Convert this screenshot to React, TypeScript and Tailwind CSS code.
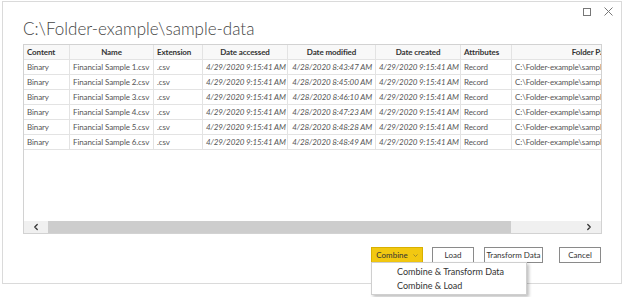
import { ChevronLeft, ChevronRight } from 'lucide-react';

const rows = [
  { n: 1, mod: '4/28/2020 8:43:47 AM' },
  { n: 2, mod: '4/28/2020 8:45:00 AM' },
  { n: 3, mod: '4/28/2020 8:46:10 AM' },
  { n: 4, mod: '4/28/2020 8:47:23 AM' },
  { n: 5, mod: '4/28/2020 8:48:28 AM' },
  { n: 6, mod: '4/28/2020 8:48:49 AM' },
];

const cell = 'h-[15px] border-r border-b border-[#e3e3e3] px-[3px] leading-[14px] whitespace-nowrap overflow-hidden';

export default function App() {
  return (
    <div className="relative w-[624px] h-[297px] bg-white overflow-hidden" style={{ fontFamily: 'Lato, "Noto Sans", sans-serif' }}>
      <div className="ml-[2px] mt-[1px] w-[620px] h-[283px] border border-[#dadada] bg-white flex flex-col">
        {/* window controls */}
        <div className="flex justify-end items-center gap-[13px] pr-[8px] pt-[5px] h-[14px] text-[#777]">
          <svg width="8" height="8" viewBox="0 0 8 8">
            <rect x="0.5" y="0.5" width="7" height="7" fill="none" stroke="#777" strokeWidth="1" />
          </svg>
          <svg width="9" height="9" viewBox="0 0 9 9">
            <path d="M0.5 0.5 L8.5 8.5 M8.5 0.5 L0.5 8.5" stroke="#777" strokeWidth="1" />
          </svg>
        </div>

        <div className="pl-[20px] mt-[3px] h-[25px] text-[17px] font-light text-[#444] leading-[20px]">
          C:\Folder-example\sample-data
        </div>

        {/* table */}
        <div className="ml-[20px] w-[579px] h-[190px] border border-[#d2d2d2] flex flex-col">
          <div className="flex-1 overflow-hidden">
            <div className="w-[720px] text-[8px] tracking-[-0.1px] text-[#555]">
              <div className="flex font-bold text-[#333] bg-[#f8f8f8]">
                <div className={`${cell} w-[46px]`}>Content</div>
                <div className={`${cell} w-[84px] text-center`}>Name</div>
                <div className={`${cell} w-[49px]`}>Extension</div>
                <div className={`${cell} w-[85px] text-center`}>Date accessed</div>
                <div className={`${cell} w-[88px] text-center`}>Date modified</div>
                <div className={`${cell} w-[85px] text-center`}>Date created</div>
                <div className={`${cell} w-[51px]`}>Attributes</div>
                <div className={`${cell} w-[160px] text-center`}>Folder Path</div>
              </div>
              {rows.map((r) => (
                <div key={r.n} className="flex">
                  <div className={`${cell} w-[46px]`}>Binary</div>
                  <div className={`${cell} w-[84px]`}>Financial Sample {r.n}.csv</div>
                  <div className={`${cell} w-[49px]`}>.csv</div>
                  <div className={`${cell} w-[85px] text-right italic`}>4/29/2020 9:15:41 AM</div>
                  <div className={`${cell} w-[88px] text-right italic`}>{r.mod}</div>
                  <div className={`${cell} w-[85px] text-right italic`}>4/29/2020 9:15:41 AM</div>
                  <div className={`${cell} w-[51px]`}>Record</div>
                  <div className={`${cell} w-[160px]`}>C:\Folder-example\sample-data\</div>
                </div>
              ))}
            </div>
          </div>
          {/* horizontal scrollbar */}
          <div className="h-[12px] flex bg-[#f0f0f0]">
            <div className="w-[24px] flex items-center justify-center text-[#333]">
              <ChevronLeft size={10} strokeWidth={3} />
            </div>
            <div className="w-[463px] bg-[#cdcdcd]" />
            <div className="flex-1 flex items-center justify-end pr-[7px] text-[#333]">
              <ChevronRight size={10} strokeWidth={3} />
            </div>
          </div>
        </div>

        {/* buttons */}
        <div className="mt-[13px] ml-[368px] flex text-[8px] text-[#333] whitespace-nowrap">
          <div className="w-[52px] h-[16px] bg-[#f2c811] border border-[#d8b000] flex items-center justify-center gap-[5px]">
            <span>Combine</span>
            <svg width="5" height="3" viewBox="0 0 5 3">
              <path d="M0.5 0.5 L2.5 2.5 L4.5 0.5" fill="none" stroke="#8a7a30" strokeWidth="0.8" />
            </svg>
          </div>
          <div className="ml-[9px] w-[42px] h-[16px] border border-[#8a8a8a] flex items-center justify-center">Load</div>
          <div className="ml-[10px] w-[59px] h-[16px] border border-[#8a8a8a] flex items-center justify-center">Transform Data</div>
          <div className="ml-[16px] w-[42px] h-[16px] border border-[#8a8a8a] flex items-center justify-center">Cancel</div>
        </div>
      </div>

      {/* dropdown menu */}
      <div className="absolute left-[371px] top-[262px] w-[156px] h-[33px] bg-white border border-[#cfcfcf] shadow-[2px_2px_3px_rgba(0,0,0,0.25)] text-[9px] text-[#333] pl-[25px] flex flex-col justify-center gap-[3px]">
        <div className="leading-[11px]">Combine &amp; Transform Data</div>
        <div className="leading-[11px]">Combine &amp; Load</div>
      </div>
    </div>
  );
}
